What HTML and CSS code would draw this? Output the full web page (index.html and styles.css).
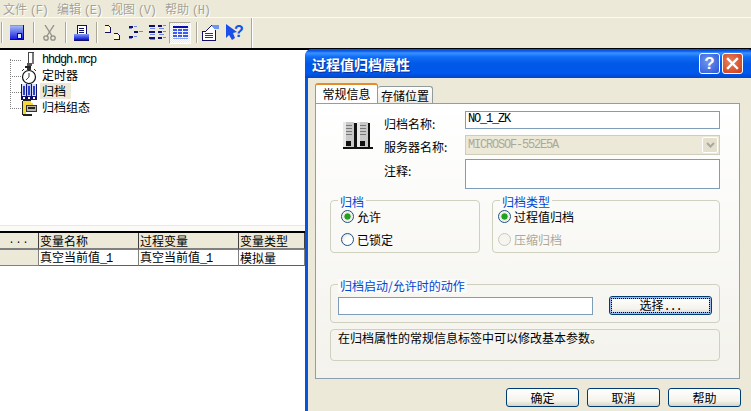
FILE: index.html
```html
<!DOCTYPE html>
<html lang="zh">
<head>
<meta charset="utf-8">
<title>过程值归档属性</title>
<link rel="stylesheet" href="styles.css">
</head>
<body>
<div class="app">
  <nav class="menu">
    <span class="menu-item">文件 <span class="lat">(F)</span></span>
    <span class="menu-item">编辑 <span class="lat">(E)</span></span>
    <span class="menu-item">视图 <span class="lat">(V)</span></span>
    <span class="menu-item">帮助 <span class="lat">(H)</span></span>
  </nav>
  <div class="toolbar">
    <span class="sep sep-first"></span>
    <svg class="tool tool-save" width="14" height="15" viewBox="0 0 14 15" shape-rendering="crispEdges"><defs><linearGradient id="g1" x1="0" y1="0" x2="0" y2="1"><stop offset="0" stop-color="#a9c4f5"/><stop offset="1" stop-color="#1212e0"/></linearGradient></defs><rect width="14" height="15" fill="url(#g1)"/><rect x="0" y="0" width="14" height="1" fill="#8a97b5"/><rect x="13" y="0" width="1" height="15" fill="#10106a"/><rect x="0" y="14" width="14" height="1" fill="#10106a"/><rect x="7" y="8" width="5" height="6" fill="#0000c8"/><rect x="8" y="9" width="3" height="4" fill="#dfe6fb"/></svg>
    <span class="sep sep-a"></span>
    <svg class="tool tool-cut" width="13" height="16" viewBox="0 0 13 16"><g fill="none" stroke="#8f8f88" stroke-width="1.3"><path d="M2 0 L9 11"/><path d="M11 0 L4 11"/><circle cx="3" cy="13" r="2.2"/><circle cx="10" cy="13" r="2.2"/></g></svg>
    <span class="sep sep-b"></span>
    <svg class="tool tool-print" width="15" height="16" viewBox="0 0 15 16" shape-rendering="crispEdges"><defs><linearGradient id="g2" x1="0" y1="0" x2="0" y2="1"><stop offset="0" stop-color="#7fa0f0"/><stop offset="1" stop-color="#0a0ad8"/></linearGradient></defs><rect x="3" y="0" width="9" height="9" fill="#fff" stroke="#10106a"/><rect x="5" y="3" width="5" height="1" fill="#10106a"/><rect x="5" y="5" width="5" height="1" fill="#10106a"/><rect x="5" y="7" width="5" height="1" fill="#10106a"/><rect x="0" y="9" width="15" height="6" fill="url(#g2)"/><rect x="0" y="15" width="15" height="1" fill="#10106a"/></svg>
    <span class="sep sep-c"></span>
    <svg class="tool tool-docs" width="16" height="15" viewBox="0 0 16 15" shape-rendering="crispEdges"><path d="M0 0h4l2 2v6H0z" fill="#fff8d8"/><path d="M0 0h4v1H0zM4 1h1v1H4zM5 2h1v6H5zM0 7h6v1H0z" fill="#10106a"/><path d="M9 8h4l2 2v5H9z" fill="#fff8d8"/><path d="M9 8h4v1H9zM13 9h1v1h-1zM14 10h1v5h-1zM9 14h6v1H9z" fill="#10106a"/></svg>
    <svg class="tool tool-tree" width="15" height="14" viewBox="0 0 15 14" shape-rendering="crispEdges"><g fill="#10106a"><rect x="1" y="0" width="4" height="2"/><rect x="6" y="5" width="4" height="2"/><rect x="1" y="10" width="4" height="2"/></g><g fill="#6f88e8"><rect x="6" y="0" width="3" height="1"/><rect x="11" y="5" width="4" height="1"/><rect x="6" y="10" width="3" height="1"/><rect x="1" y="2" width="3" height="1"/><rect x="1" y="12" width="3" height="1"/></g></svg>
    <svg class="tool tool-cols" width="17" height="15" viewBox="0 0 17 15" shape-rendering="crispEdges"><g fill="#10106a"><rect x="0" y="0" width="6" height="2"/><rect x="0" y="6" width="6" height="2"/><rect x="0" y="12" width="6" height="2"/><rect x="9" y="0" width="4" height="2"/><rect x="9" y="6" width="4" height="2"/><rect x="9" y="12" width="4" height="2"/></g><g fill="#6f88e8"><rect x="1" y="3" width="5" height="1"/><rect x="1" y="9" width="5" height="1"/><rect x="1" y="14" width="5" height="1"/><rect x="14" y="0" width="3" height="1"/><rect x="14" y="6" width="3" height="1"/><rect x="14" y="12" width="3" height="1"/><rect x="10" y="3" width="5" height="1"/><rect x="10" y="9" width="5" height="1"/></g></svg>
    <span class="tool-active">
      <svg width="15" height="13" viewBox="0 0 15 13" shape-rendering="crispEdges"><rect width="15" height="2" fill="#0a0ab0"/><g fill="#3a5ce8"><rect y="3" width="4" height="2"/><rect x="5" y="3" width="4" height="2"/><rect x="10" y="3" width="5" height="2"/><rect y="6" width="4" height="2"/><rect x="5" y="6" width="4" height="2"/><rect x="10" y="6" width="5" height="2"/><rect y="9" width="4" height="2"/><rect x="5" y="9" width="4" height="2"/><rect x="10" y="9" width="5" height="2"/></g><rect y="12" width="15" height="1" fill="#8ea3ee"/></svg>
    </span>
    <span class="sep sep-d"></span>
    <svg class="tool tool-prop" width="17" height="16" viewBox="0 0 17 16" shape-rendering="crispEdges"><path d="M3 6 9 0h8v4h-4v12H0V6z" fill="#fff"/><path d="M9 0h8v4h-5z" fill="#6f97ee"/><path d="M0 6h3L9 0h1L4 7H1v8h12V5h1v11H0z" fill="#10106a"/><g fill="#1a2fd0"><rect x="3" y="8" width="8" height="1"/><rect x="3" y="10" width="8" height="1"/><rect x="3" y="12" width="8" height="1"/></g></svg>
    <svg class="tool tool-help" width="18" height="17" viewBox="0 0 18 17"><path d="M0 0 L11 8 L7 9 L9 14 L6 16 L3 11 L0 14 Z" fill="#1a50e8"/><text class="help-q" x="8" y="13">?</text></svg>
    <span class="sep sep-e"></span>
  </div>
  <div class="tree">
    <div class="tree-row">
      <svg class="tree-icon" width="16" height="16" viewBox="0 0 16 16" shape-rendering="crispEdges"><rect x="7" y="0" width="5" height="11" fill="#fff" stroke="#444"/><rect x="11" y="1" width="2" height="11" fill="#777"/><rect x="6" y="11" width="5" height="3" fill="#555"/><rect x="4" y="14" width="6" height="2" fill="#222"/></svg>
      <span class="tree-label tree-label-file lat">hhdgh.mcp</span>
    </div>
    <div class="tree-row">
      <svg class="tree-icon" width="16" height="16" viewBox="0 0 16 16"><rect x="6" y="0" width="4" height="2" fill="#333"/><path d="M1 3 3 1M15 3 13 1" stroke="#333"/><circle cx="8" cy="9" r="6.500" fill="#fff" stroke="#111" stroke-width="1.2"/><path d="M8 9 5 12" stroke="#e01010"/><path d="M8 9V5" stroke="#333"/></svg>
      <span class="tree-label">定时器</span>
    </div>
    <div class="tree-row">
      <svg class="tree-icon" width="16" height="16" viewBox="0 0 16 16" shape-rendering="crispEdges"><rect width="16" height="16" fill="#10106a"/><rect x="1" y="0" width="4" height="12" fill="#d8def2"/><rect x="6" y="0" width="4" height="12" fill="#b8c4ee"/><rect x="11" y="0" width="4" height="12" fill="#d8def2"/><rect x="2" y="2" width="2" height="9" fill="#2a3fd8"/><rect x="7" y="2" width="2" height="9" fill="#2a3fd8"/><rect x="12" y="2" width="2" height="9" fill="#2a3fd8"/><rect x="2" y="13" width="2" height="2" fill="#fff"/><rect x="7" y="13" width="2" height="2" fill="#fff"/><rect x="12" y="13" width="2" height="2" fill="#fff"/></svg>
      <span class="tree-label tree-label-sel">归档</span>
    </div>
    <div class="tree-row">
      <svg class="tree-icon" width="16" height="16" viewBox="0 0 16 16" shape-rendering="crispEdges"><path d="M2 1h8v2h2v2H2z" fill="#f6d838"/><rect x="1" y="1" width="1" height="14" fill="#222"/><rect x="2" y="0" width="8" height="1" fill="#222"/><rect x="2" y="5" width="3" height="10" fill="#f6d838"/><rect x="2" y="14" width="9" height="2" fill="#222"/><rect x="5" y="5" width="11" height="7" fill="#333"/><rect x="6" y="6" width="9" height="5" fill="#b8b8b0"/><rect x="7" y="7" width="7" height="2" fill="#222"/></svg>
      <span class="tree-label">归档组态</span>
    </div>
  </div>
  <div class="split"></div>
  <table class="vars">
    <colgroup><col class="c0"><col class="c1"><col class="c2"><col class="c3"></colgroup>
    <thead>
      <tr><th class="dots">...</th><th>变量名称</th><th>过程变量</th><th>变量类型</th></tr>
    </thead>
    <tbody>
      <tr><th></th><td>真空当前值<span class="lat">_1</span></td><td>真空当前值<span class="lat">_1</span></td><td>模拟量</td></tr>
    </tbody>
  </table>

  <section class="dialog">
    <header class="titlebar">
      <span class="title">过程值归档属性</span>
      <span class="cap cap-help">?</span>
      <span class="cap cap-close"><svg width="13" height="13" viewBox="0 0 13 13"><path d="M2 2 11 11M11 2 2 11" stroke="#fff" stroke-width="2.4" stroke-linecap="square"/></svg></span>
    </header>
    <div class="dialog-body">
      <div class="tabs">
        <span class="tab tab-on">常规信息</span>
        <span class="tab">存储位置</span>
      </div>
      <div class="panel">
        <div class="form">
          <svg class="server" width="30" height="27" viewBox="0 0 30 27" shape-rendering="crispEdges">
            <rect x="11" y="1" width="4" height="25" fill="#111"/><rect x="25" y="1" width="2" height="25" fill="#111"/><rect x="0" y="25" width="30" height="2" fill="#111"/>
            <rect width="11" height="25" fill="#c8c8c8"/><rect x="14" width="11" height="25" fill="#c8c8c8"/>
            <rect width="3" height="25" fill="#e8e8e8"/><rect x="14" width="3" height="25" fill="#e8e8e8"/>
            <g fill="#777"><rect x="3" y="3" width="6" height="1"/><rect x="3" y="6" width="6" height="1"/><rect x="3" y="9" width="6" height="1"/><rect x="3" y="12" width="6" height="1"/><rect x="17" y="3" width="6" height="1"/><rect x="17" y="6" width="6" height="1"/><rect x="17" y="9" width="6" height="1"/><rect x="17" y="12" width="6" height="1"/></g>
            <rect x="3" y="19" width="5" height="5" fill="#111"/><rect x="17" y="19" width="5" height="5" fill="#111"/>
          </svg>
          <label class="lbl lbl-1">归档名称:</label>
          <div class="input input-h18 lat">NO_1_ZK</div>
          <label class="lbl lbl-2">服务器名称:</label>
          <div class="combo">
            <span class="combo-text lat">MICROSOF-552E5A</span>
            <span class="combo-btn"><svg width="9" height="6" viewBox="0 0 9 6"><path d="M1 1 4.500 4.500 8 1" fill="none" stroke="#aca899" stroke-width="2"/></svg></span>
          </div>
          <label class="lbl lbl-2">注释:</label>
          <div class="input input-h30"></div>
        </div>
        <div class="group-row">
          <div class="group group-a">
            <span class="legend">归档</span>
            <div class="radio-row"><span class="radio radio-on"></span>允许</div>
            <div class="radio-row"><span class="radio"></span>已锁定</div>
          </div>
          <div class="group group-b">
            <span class="legend">归档类型</span>
            <div class="radio-row"><span class="radio radio-on"></span>过程值归档</div>
            <div class="radio-row radio-row-off"><span class="radio radio-off"></span>压缩归档</div>
          </div>
        </div>
        <div class="group group-action">
          <span class="legend">归档启动/允许时的动作</span>
          <div class="input input-action"></div>
          <span class="btn btn-select"><span class="focus">选择<span class="lat">...</span></span></span>
        </div>
        <div class="group group-info">在归档属性的常规信息标签中可以修改基本参数。</div>
      </div>
      <footer class="actions">
        <span class="btn btn-foot">确定</span>
        <span class="btn btn-foot">取消</span>
        <span class="btn btn-foot">帮助</span>
      </footer>
    </div>
  </section>
</div>
</body>
</html>
```

FILE: styles.css
```css
* { box-sizing: border-box; }
html, body { margin: 0; padding: 0; }
body {
  width: 751px;
  height: 411px;
  overflow: hidden;
  background: #fff;
  font: 12px/16px "Noto Sans CJK SC", "Liberation Sans", sans-serif;
  color: #000;
}
.app { position: relative; width: 751px; height: 411px; overflow: hidden; }
.lat { font-family: "Liberation Mono", monospace; font-size: 12px; letter-spacing: -1.2px; line-height: 1; }

.menu {
  display: flex;
  height: 18px;
  padding-left: 3px;
  gap: 14px;
  background: #ece9d8;
  border-bottom: 1px solid #fbfaf4;
  color: #a5a294;
  line-height: 17px;
  text-shadow: 1px 1px 0 #fff;
}
.menu-item { width: 40px; white-space: nowrap; }

.toolbar {
  display: flex;
  align-items: center;
  height: 32px;
  background: #ece9d8;
  border-bottom: 2px solid #000;
  padding-bottom: 1px;
}
.sep { width: 2px; height: 21px; border-left: 1px solid #aca899; border-right: 1px solid #fff; flex: none; }
.sep-first { margin-left: 1px; }
.tool { flex: none; }
.tool-save { margin-left: 7px; }
.sep-a { margin-left: 9px; }
.tool-cut { margin-left: 8px; }
.sep-b { margin-left: 9px; }
.tool-print { margin-left: 7px; }
.sep-c { margin-left: 7px; }
.tool-docs { margin-left: 7px; }
.tool-tree { margin-left: 7px; }
.tool-cols { margin-left: 6px; }
.tool-active {
  display: flex;
  align-items: center;
  justify-content: center;
  width: 22px;
  height: 22px;
  margin-left: 3px;
  border: 1px solid;
  border-color: #aca899 #fff #fff #aca899;
  background: repeating-conic-gradient(#fff 0 25%, #ece9d8 0 50%) 0 0 / 2px 2px;
  flex: none;
}
.sep-d { margin-left: 5px; }
.tool-prop { margin-left: 4px; }
.tool-help { margin-left: 7px; }
.help-q { font: bold 16px "Liberation Sans", sans-serif; fill: #1a50e8; }
.sep-e { margin-left: 7px; height: 30px; }

.tree {
  position: relative;
  height: 175px;
  padding: 2px 0 0 21px;
}
.tree::before {
  content: "";
  position: absolute;
  left: 10px;
  top: 9px;
  height: 48px;
  border-left: 1px dotted #808080;
}
.tree-row {
  position: relative;
  display: flex;
  align-items: center;
  height: 16px;
}
.tree-row::before {
  content: "";
  position: absolute;
  left: -11px;
  top: 8px;
  width: 11px;
  border-top: 1px dotted #808080;
}
.tree-icon { flex: none; }
.tree-label { margin: 0 0 2px 3px; padding: 0 2px; line-height: 16px; white-space: nowrap; }
.tree-label-file { margin-bottom: 1px; line-height: 16px; }
.tree-label-sel { background: #ece9d8; width: 31px; }

.split { height: 6px; border-top: 1px solid #ece9d8; background: #fbfaf6; }

.vars {
  width: 305px;
  table-layout: fixed;
  border-collapse: separate;
  border-spacing: 0;
  border-top: 2px solid #000;
}
.c0 { width: 39px; }
.c1, .c2 { width: 100px; }
.c3 { width: 66px; }
.vars th, .vars td {
  padding: 0 0 0 1px;
  height: 16px;
  font-weight: normal;
  text-align: left;
  line-height: 14px;
  white-space: nowrap;
  border-right: 1px solid #808080;
  border-bottom: 1px solid #808080;
}
.vars th { background: #ece9d8; }
.vars thead th { height: 17px; border-right-color: #404040; border-bottom-width: 2px; }
.vars td { border-bottom-color: #606060; height: 16px; }
.vars .dots { padding: 0; text-align: center; font-family: "Liberation Mono", monospace; font-size: 10px; letter-spacing: 1px; }

.dialog {
  position: absolute;
  left: 305px;
  top: 49px;
  width: 449px;
  height: 364px;
  border-radius: 7px 7px 0 0;
  overflow: hidden;
  background: #0855dd;
}
.titlebar {
  display: flex;
  align-items: center;
  height: 29px;
  padding: 0 7px 0 7px;
  background: linear-gradient(#0a4fd8 0, #0a5ae8 2px, #3a93ff 4px, #0f6cf5 8px, #0058e6 15px, #0058ee 24px, #0046c8 29px);
}
.title { flex: 1; color: #fff; font-weight: bold; font-size: 14px; line-height: 18px; text-shadow: 1px 1px 0 #0b2f9c; }
.cap {
  display: flex;
  align-items: center;
  justify-content: center;
  width: 21px;
  height: 21px;
  border: 1px solid #fff;
  border-radius: 3px;
  color: #fff;
  flex: none;
}
.cap-help {
  margin-right: 2px;
  font: bold 17px/19px "Liberation Sans", sans-serif;
  background: radial-gradient(circle at 40% 40%, #6d95ee, #2a55d8);
}
.cap-close { margin-right: 4px; background: radial-gradient(circle at 40% 40%, #ea8060, #c93a12); }

.dialog-body {
  margin-left: 3px;
  height: 335px;
  background: #ece9d8;
  padding: 6px 0 0 7px;
}
.tabs { display: flex; align-items: flex-end; height: 19px; position: relative; z-index: 1; }
.tab {
  width: 55px;
  height: 17px;
  text-align: center;
  line-height: 17px;
  border: 1px solid #919b9c;
  border-bottom: 0;
  border-left: 0;
  border-radius: 3px 3px 0 0;
  background: linear-gradient(#fff, #ecebe5);
}
.tab-on {
  width: 63px;
  height: 20px;
  border: 1px solid #919b9c;
  border-bottom: 0;
  border-top: 2px solid #e68b2c;
  background: #fff;
  line-height: 18px;
}
.panel {
  width: 425px;
  height: 276px;
  border: 1px solid #8aa0b0;
  background: linear-gradient(#fff, #f3f2ec);
  padding: 7px 0 0 14px;
}
.form {
  display: grid;
  grid-template-columns: 13px 41px 81px 255px;
  grid-template-rows: 24px 24px 30px;
  align-items: start;
}
.form > .lbl { grid-column: 3; }
.form > .input, .form > .combo { grid-column: 4; }
.server { grid-column: 2; grid-row: 1 / 4; margin-top: 11px; }
.lbl { line-height: 16px; white-space: nowrap; }
.lbl-1 { margin-top: 5px; }
.lbl-2 { margin-top: 4px; }
.input {
  border: 1px solid #7f9db9;
  background: #fff;
  line-height: 15px;
  padding-left: 2px;
}
.input-h18 { height: 18px; }
.input-h30 { height: 30px; }
.combo {
  display: flex;
  align-items: center;
  justify-content: space-between;
  height: 20px;
  border: 1px solid #cfccba;
  background: #ece9d8;
  padding-right: 1px;
  color: #aca899;
}
.combo-text { padding-left: 2px; }
.combo-btn {
  display: flex;
  align-items: center;
  justify-content: center;
  width: 16px;
  height: 16px;
  border: 1px solid #fff;
  border-radius: 2px;
  background: #e3e0d0;
}
.group-row { display: flex; gap: 12px; margin-top: 11px; }
.group {
  position: relative;
  border: 1px solid #d0d0bf;
  border-radius: 4px;
}
.group-a { width: 150px; height: 53px; padding: 8px 0 0 10px; }
.group-b { width: 228px; height: 53px; padding: 8px 0 0 5px; }
.legend {
  position: absolute;
  left: 7px;
  top: -6px;
  padding: 0 2px;
  color: #0046d5;
  background: #fbfbf8;
  line-height: 14px;
  white-space: nowrap;
}
.radio-row { display: flex; align-items: center; gap: 3px; height: 15px; margin-bottom: 8px; line-height: 15px; white-space: nowrap; }
.radio-row-off { color: #aca899; }
.radio {
  width: 13px;
  height: 13px;
  border-radius: 50%;
  border: 1px solid #1c5180;
  background: radial-gradient(circle at 65% 65%, #fff 40%, #dcd8ca);
  flex: none;
}
.radio-on { background: radial-gradient(circle, #21a121 0 2.8px, #e8e6da 3.4px, #fff 6px); }
.radio-off { border-color: #cac8bb; background: #f5f4ee; }
.group-action {
  display: flex;
  align-items: center;
  justify-content: space-between;
  width: 390px;
  height: 39px;
  margin-top: 31px;
  padding: 2px 7px 0 7px;
}
.input-action { width: 255px; height: 18px; margin-top: 3px; }
.btn {
  display: flex;
  align-items: center;
  justify-content: center;
  border: 1px solid #003c74;
  border-radius: 3px;
  background: linear-gradient(#fff, #f4f3ec 70%, #d8d4c4);
  line-height: 15px;
  white-space: nowrap;
}
.btn-select { width: 103px; height: 19px; padding: 1px; margin-top: 1px; box-shadow: inset 0 0 0 2px #a0bbe8; }
.focus { display: block; width: 100%; height: 100%; border: 1px dotted #000; text-align: center; line-height: 11px; }
.group-info {
  width: 390px;
  height: 32px;
  margin-top: 6px;
  padding: 0 7px;
  line-height: 16px;
}
.actions { display: flex; justify-content: flex-end; gap: 8px; width: 426px; margin-top: 9px; }
.btn-foot { width: 73px; height: 19px; }
```
